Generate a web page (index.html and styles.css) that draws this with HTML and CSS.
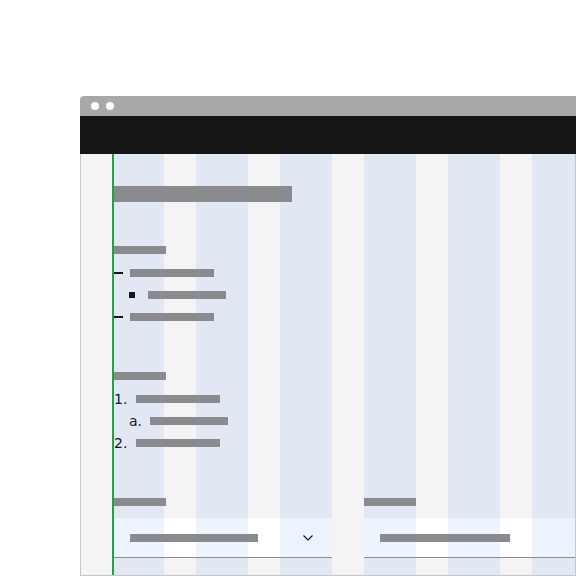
FILE: index.html
```html
<!DOCTYPE html>
<html lang="en">
<head>
  <meta charset="UTF-8">
  <meta name="viewport" content="width=device-width, initial-scale=1.0">
  <title>Layout sketch</title>
  <link rel="stylesheet" href="styles.css">
</head>
<body>
  <div class="window">
    <div class="titlebar">
      <span class="dot"></span>
      <span class="dot"></span>
    </div>
    <div class="header"></div>

    <div class="canvas">
      <div class="grid">
        <span class="bar title"></span>

        <!-- Lista sin orden -->
        <section class="block">
          <span class="bar label"></span>
          <ul class="list">
            <li class="row"><span class="dash"></span><span class="bar item"></span></li>
            <li class="row sub"><span class="square"></span><span class="bar subitem"></span></li>
            <li class="row"><span class="dash"></span><span class="bar item"></span></li>
          </ul>
        </section>

        <!-- Lista ordenada -->
        <section class="block">
          <span class="bar label"></span>
          <ol class="list">
            <li class="row"><span class="num">1.</span><span class="bar item"></span></li>
            <li class="row sub"><span class="num letter">a.</span><span class="bar subitem"></span></li>
            <li class="row"><span class="num">2.</span><span class="bar item"></span></li>
          </ol>
        </section>

        <!-- Formulario -->
        <section class="block form">
          <div class="group">
            <span class="bar label"></span>
            <div class="field first">
              <span class="bar value"></span>
              <svg class="chevron" width="10" height="6" viewBox="0 0 10 6">
                <path d="M0.5 0.5 L5 5 L9.5 0.5" fill="none" stroke="#161616" stroke-width="1.2"/>
              </svg>
            </div>
          </div>
          <div class="group">
            <span class="bar label"></span>
            <div class="field">
              <span class="bar value wide"></span>
            </div>
          </div>
        </section>
      </div>
    </div>
  </div>
</body>
</html>
```

FILE: styles.css
```css
body {
  margin: 0;
  background-color: #ffffff;
  font-family: "DejaVu Sans", sans-serif;
  color: #161616;
}

.window {
  margin: 96px 0 0 80px;
  width: 496px;
  height: 480px;
}

.titlebar {
  height: 20px;
  background-color: #a8a8a8;
  border-radius: 4px 0 0 0;
  display: flex;
  align-items: center;
  gap: 7px;
  padding-left: 11px;
}

.dot {
  width: 8px;
  height: 8px;
  border-radius: 50%;
  background-color: #ffffff;
}

.header {
  height: 38px;
  background-color: #161616;
}

.canvas {
  box-sizing: border-box;
  height: 422px;
  border: 1px solid #c6c6c6;
  border-top: none;
  background-color: #f4f4f4;
  padding-left: 31px;
}

.grid {
  height: 100%;
  box-sizing: border-box;
  border-left: 2px solid #24a148;
  padding-top: 32px;
  background-image: repeating-linear-gradient(90deg, #e1e8f3 0 52px, #f4f4f4 52px 84px);
  background-origin: border-box;
}

.bar {
  display: block;
  height: 8px;
  background-color: #898b8f;
}

.title {
  width: 178px;
  height: 16px;
}

.label {
  width: 52px;
}

.block {
  margin-top: 44px;
}

.list {
  list-style: none;
  margin: 8px 0 0 0;
  padding: 0;
}

.row {
  display: flex;
  align-items: center;
  height: 22px;
}

.row.sub {
  padding-left: 15px;
}

.item {
  width: 84px;
}

.subitem {
  width: 78px;
}

.dash {
  width: 9px;
  height: 1.5px;
  background-color: #161616;
  margin-right: 7px;
}

.square {
  width: 6px;
  height: 6px;
  background-color: #161616;
  margin-right: 13px;
}

.num {
  width: 22px;
  font-size: 14px;
  line-height: 22px;
}

.num.letter {
  width: 21px;
}

.form {
  display: grid;
  grid-template-columns: 218px 1fr;
  column-gap: 32px;
}

.field {
  box-sizing: border-box;
  height: 40px;
  margin-top: 12px;
  padding: 0 19px 0 16px;
  display: flex;
  align-items: center;
  justify-content: space-between;
  border-bottom: 1px solid #8d8d8d;
  background-image: repeating-linear-gradient(90deg, #edf4fe 0 52px, #ffffff 52px 84px);
}

.field.first {
  background-position: -2px 0;
}

.value {
  width: 128px;
}

.value.wide {
  width: 130px;
}

.chevron {
  display: block;
}
```
